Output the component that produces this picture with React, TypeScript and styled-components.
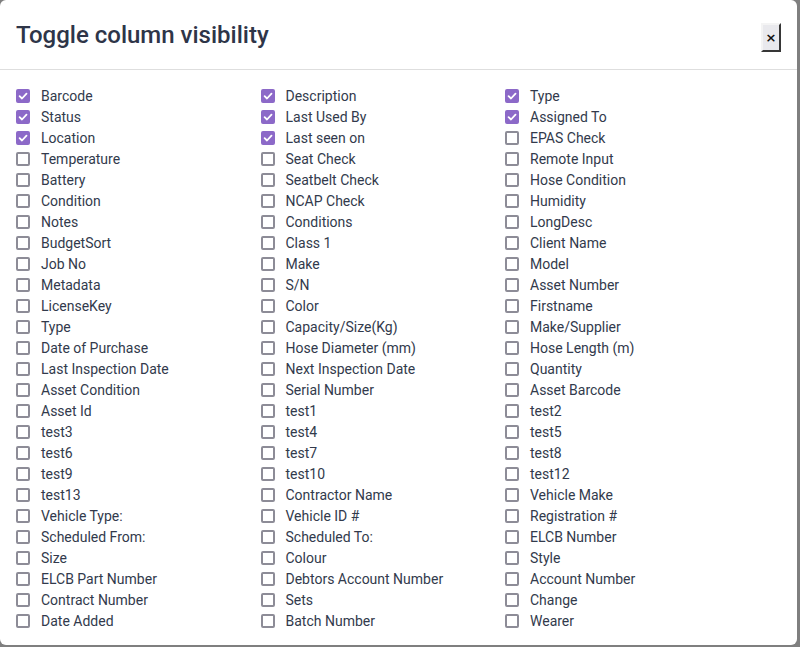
import {useState} from 'react';
import styled, {createGlobalStyle} from 'styled-components';

const GlobalStyle = createGlobalStyle`
  html, body {
    margin: 0;
    padding: 0;
    background: #7f7f7f;
  }
  body {
    font-family: Roboto, "Noto Sans", "Liberation Sans", sans-serif;
    overflow: hidden;
  }
`;

const rows: [string, string, string][] = [
  ['Barcode', 'Description', 'Type'],
  ['Status', 'Last Used By', 'Assigned To'],
  ['Location', 'Last seen on', 'EPAS Check'],
  ['Temperature', 'Seat Check', 'Remote Input'],
  ['Battery', 'Seatbelt Check', 'Hose Condition'],
  ['Condition', 'NCAP Check', 'Humidity'],
  ['Notes', 'Conditions', 'LongDesc'],
  ['BudgetSort', 'Class 1', 'Client Name'],
  ['Job No', 'Make', 'Model'],
  ['Metadata', 'S/N', 'Asset Number'],
  ['LicenseKey', 'Color', 'Firstname'],
  ['Type', 'Capacity/Size(Kg)', 'Make/Supplier'],
  ['Date of Purchase', 'Hose Diameter (mm)', 'Hose Length (m)'],
  ['Last Inspection Date', 'Next Inspection Date', 'Quantity'],
  ['Asset Condition', 'Serial Number', 'Asset Barcode'],
  ['Asset Id', 'test1', 'test2'],
  ['test3', 'test4', 'test5'],
  ['test6', 'test7', 'test8'],
  ['test9', 'test10', 'test12'],
  ['test13', 'Contractor Name', 'Vehicle Make'],
  ['Vehicle Type:', 'Vehicle ID #', 'Registration #'],
  ['Scheduled From:', 'Scheduled To:', 'ELCB Number'],
  ['Size', 'Colour', 'Style'],
  ['ELCB Part Number', 'Debtors Account Number', 'Account Number'],
  ['Contract Number', 'Sets', 'Change'],
  ['Date Added', 'Batch Number', 'Wearer'],
];

// first 8 items in row order are visible by default
const initialColumns = rows.flat().map((label, i) => ({
  id: i,
  label,
  visible: i < 8,
}));

const App = () => {
  const [columns, setColumns] = useState(initialColumns);

  const toggle = (id: number) =>
    setColumns((cols) =>
      cols.map((c) => (c.id === id ? {...c, visible: !c.visible} : c))
    );

  return (
    <>
      <GlobalStyle />
      <Modal>
        <Header>
          <Title>Toggle column visibility</Title>
          <CloseButton type="button">×</CloseButton>
        </Header>
        <Body>
          {columns.map((col) => (
            <Option key={col.id} onClick={() => toggle(col.id)}>
              <Box checked={col.visible}>
                {col.visible && (
                  <svg width="10" height="10" viewBox="0 0 10 10">
                    <path
                      d="M1.6 5.2 L4 7.5 L8.5 2.6"
                      fill="none"
                      stroke="#fff"
                      strokeWidth="1.8"
                      strokeLinecap="round"
                      strokeLinejoin="round"
                    />
                  </svg>
                )}
              </Box>
              <Label>{col.label}</Label>
            </Option>
          ))}
        </Body>
      </Modal>
    </>
  );
};

const Modal = styled.div`
  width: 797px;
  height: 645px;
  background: #fff;
  border-radius: 6px;
  display: flex;
  flex-direction: column;
  overflow: hidden;
`;

const Header = styled.div`
  height: 70px;
  box-sizing: border-box;
  display: flex;
  align-items: center;
  justify-content: space-between;
  padding: 0 16px;
  border-bottom: 1px solid #dedede;
`;

const Title = styled.h2`
  margin: 0;
  padding-top: 2px;
  font-size: 24px;
  font-weight: 500;
  color: #2e3548;
  line-height: 1.2;
`;

const CloseButton = styled.button`
  width: 20px;
  height: 29px;
  margin-top: 5px;
  padding: 0;
  background: #e9e9ed;
  border: 2px outset #f4f4f4;
  border-right-color: #8a8a8a;
  border-bottom-color: #8a8a8a;
  font-family: "DejaVu Sans", sans-serif;
  font-size: 13px;
  font-weight: bold;
  color: #111;
  line-height: 1;
`;

const Body = styled.div`
  display: grid;
  grid-template-columns: repeat(3, 244.5px);
  grid-auto-rows: 21px;
  padding: 15px 16px 0 16px;
`;

const Option = styled.label`
  display: flex;
  align-items: center;
  gap: 11px;
  cursor: pointer;
  user-select: none;
`;

const Box = styled.span<{checked: boolean}>`
  width: 14px;
  height: 14px;
  box-sizing: border-box;
  flex: none;
  border-radius: 2px;
  display: flex;
  align-items: center;
  justify-content: center;
  background: ${(p) => (p.checked ? '#8c69c8' : '#fff')};
  border: 2px solid ${(p) => (p.checked ? '#8c69c8' : '#8d8c97')};
`;

const Label = styled.span`
  font-size: 14px;
  color: #323a4c;
  white-space: nowrap;
`;

export default App;
